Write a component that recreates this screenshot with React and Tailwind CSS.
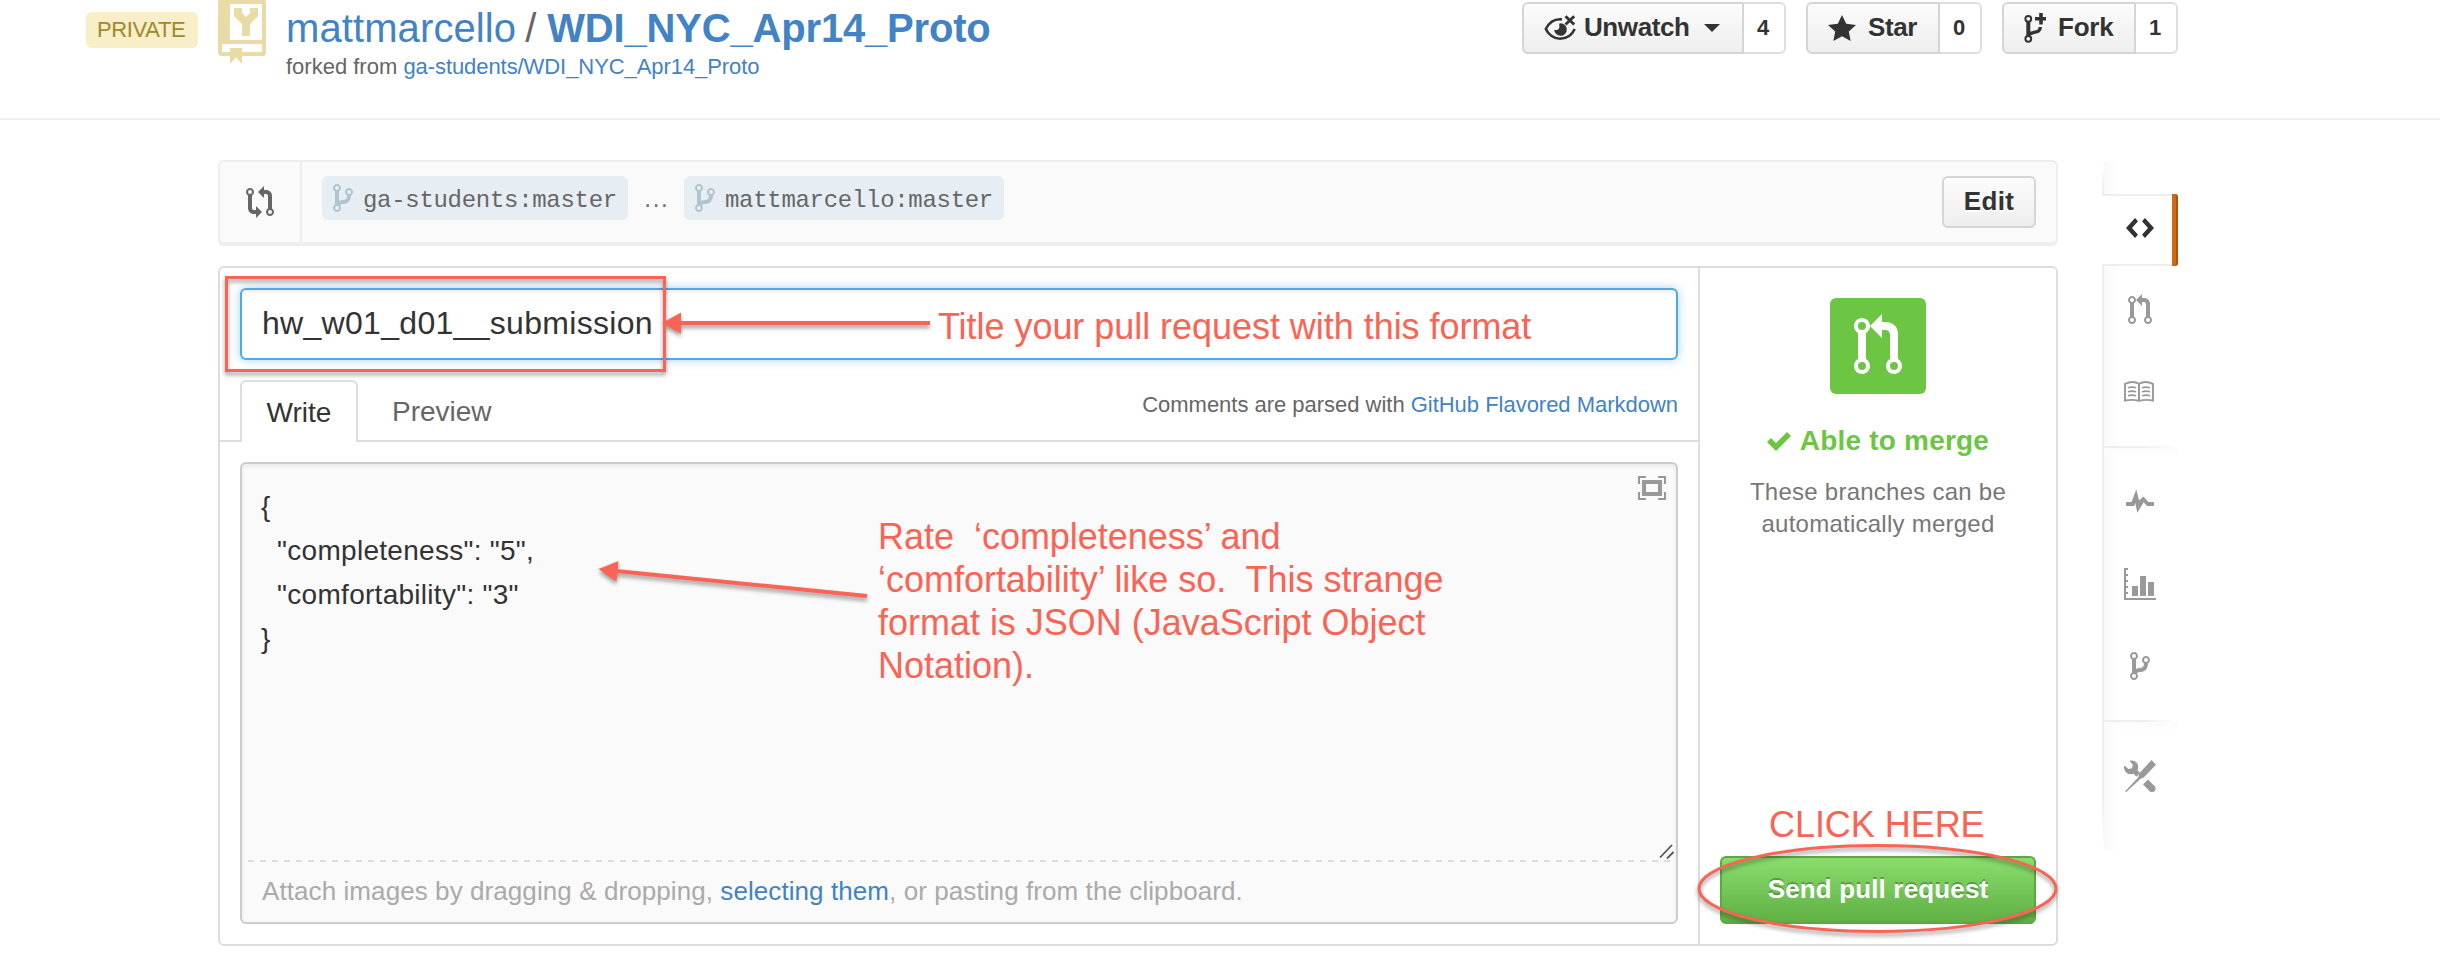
import React from "react";

const FONT = "font-['Liberation_Sans',Arial,sans-serif]";

function BranchIcon({ className }) {
  return (
    <svg viewBox="0 0 640 896" className={className} fill="currentColor" fillRule="evenodd">
      <path d="M512 128c-70.6 0-128 57.3-128 128 0 47.2 25.9 88 64 110.300V384s0 128-128 128c-53 0-94.700 11.400-128 28.800V238.300c38.200-22.200 64-63 64-110.300C256 57.300 198.700 0 128 0S0 57.300 0 128c0 47.200 25.800 88 64 110.300v419.400C25.800 680 0 720.800 0 768c0 70.600 57.300 128 128 128s128-57.400 128-128c0-33.500-13.200-63.700-34.200-86.600C240.400 658.500 270.700 640 320 640c254 0 256-256 256-256v-17.700c38.100-22.200 64-63 64-110.300 0-70.700-57.400-128-128-128zM128 64a64 64 0 1 1 0 128 64 64 0 0 1 0-128zm0 768a64 64 0 1 1 0-128 64 64 0 0 1 0 128zm384-512a64 64 0 1 1 0-128 64 64 0 0 1 0 128z" />
    </svg>
  );
}

function PullRequestIcon({ className }) {
  return (
    <svg viewBox="0 0 768 960" className={className} fill="currentColor" fillRule="evenodd">
      <path d="M128 64C57.300 64 0 121.300 0 192c0 47.200 25.800 88 64 110.300v419.400C25.800 744 0 784.800 0 832c0 70.600 57.300 128 128 128s128-57.400 128-128c0-47.200-25.800-88-64-110.300V302.300c38.200-22.200 64-63 64-110.300 0-70.700-57.300-128-128-128zm0 832a64 64 0 1 1 0-128 64 64 0 0 1 0 128zm0-640a64 64 0 1 1 0-128 64 64 0 0 1 0 128z" />
      <path d="M704 721.700V320c0-192.500-192-192-192-192h-64V0L256 192l192 192V256h64c56.400 0 64 64 64 64v401.700c-38.100 22.200-64 63-64 110.300 0 70.600 57.400 128 128 128s128-57.400 128-128c0-47.200-25.900-88-64-110.300zM640 896a64 64 0 1 1 0-128 64 64 0 0 1 0 128z" />
    </svg>
  );
}

function CompareIcon({ className }) {
  return (
    <svg viewBox="0 0 896 1024" className={className} fill="currentColor" fillRule="evenodd">
      <path d="M320 768h-64s-64 0-64-64V302.300c38.200-22.200 64-63 64-110.300 0-70.700-57.300-128-128-128S0 121.300 0 192c0 47.200 25.800 88 64 110.300V704c0 192 192 192 192 192h64v128l192-192-192-192v128zM128 256a64 64 0 1 1 0-128 64 64 0 0 1 0 128z" />
      <path d="M832 721.700V320c0-192-192-192-192-192h-64V0L384 192l192 192V256h64s64 0 64 64v401.700c-38.100 22.200-64 63-64 110.300 0 70.600 57.400 128 128 128s128-57.400 128-128c0-47.200-25.900-88-64-110.300zM768 896a64 64 0 1 1 0-128 64 64 0 0 1 0 128z" />
    </svg>
  );
}

function RepoIcon() {
  return (
    <svg viewBox="0 0 48 64" className="ml-5 h-16 w-12 shrink-0">
      <rect x="0" y="-1" width="48" height="57" rx="3.500" fill="#e9dba5" />
      <path d="M12 4h32v36H12zM4 44h40v8H4z" fill="#fff" />
      <path d="M16 8h8v5l4 4 4-4V8h8v8l-8 8v12h-8V24l-8-8z" fill="#e9dba5" />
      <path d="M12 48h12v16l-6-6.500-6 6.500z" fill="#e9dba5" />
    </svg>
  );
}

function UnwatchIcon() {
  return (
    <svg viewBox="0 0 34 26" className="mr-[6px] h-[26px] w-[34px]" fill="none" stroke="#333">
      <path d="M18 4.400C10 3.600 4.600 8.500 1.800 14 4 19 9.500 23.700 16 23.700c7 0 12.400-4.300 14.700-9.700" strokeWidth="2.600" />
      <path d="M16.500 8.200a6.300 6.300 0 1 1-6.300 6.500c2 .8 4.400 0 5-1.800.6-1.700-.4-2.900.2-4.400z" fill="#333" stroke="none" />
      <path d="M21.500 1.200l8.700 8.400M30.200 1.200l-8.700 8.400" strokeWidth="2.800" />
    </svg>
  );
}

function StarIcon() {
  return (
    <svg viewBox="0 64 896 832" className="mr-3 h-[26px] w-7" fill="#333">
      <path d="M896 384l-313.500-40.800L448 64 313.500 343.200 0 384l230.500 208.900L171 895.900l277-148.800 277 148.800-59.500-303z" />
    </svg>
  );
}

function ForkIcon() {
  return (
    <svg viewBox="0 0 22 30" className="mr-3 h-[30px] w-[22px]" fill="none" stroke="#333">
      <circle cx="4.300" cy="5.800" r="2.900" strokeWidth="2" />
      <circle cx="4.300" cy="25.800" r="2.900" strokeWidth="2" />
      <path d="M4.300 8.500v14.500" strokeWidth="4" />
      <path d="M5 21.500c3-3.500 11.300-.5 11.300-7.500" strokeWidth="3.400" />
      <path d="M17 0v11.500M11 5.700h11" strokeWidth="3.600" />
    </svg>
  );
}

function SocialButton({ icon, label, count, className, labelClass, caret }) {
  return (
    <div className="flex h-[52px]">
      <div className={`flex items-center rounded-l-md border-2 border-[#d5d5d5] bg-linear-to-b from-[#fcfcfc] to-[#eeeeee] pl-5 ${className}`}>
        {icon}
        <span className={`pb-[2px] text-[26px] leading-[46px] font-bold text-[#333] [text-shadow:0_2px_0_rgba(255,255,255,0.9)] ${labelClass}`}>{label}</span>
        {caret && (
          <svg viewBox="0 0 16 8" className="ml-[15px] h-2 w-4" fill="#333"><path d="M0 0h16L8 8z" /></svg>
        )}
      </div>
      <div className="w-[42px] rounded-r-md border-2 border-l-0 border-[#ddd] bg-white pr-[2px] text-center text-[22px] leading-[48px] font-bold text-[#333]">{count}</div>
    </div>
  );
}

function Header() {
  return (
    <header className="flex h-[120px] items-start border-b-2 border-[#eee] pr-[262px] pl-[86px]">
      <span className="mt-3 h-9 w-28 rounded-md bg-[#f8eec7] pl-[11px] text-[22px] leading-9 tracking-[-0.37px] text-[#a1882b]">PRIVATE</span>
      <RepoIcon />
      <div className="ml-5 pt-1 whitespace-nowrap">
        <h1 className="text-[40px] leading-[48px] text-[#4183c4]">
          <span className="tracking-[0.1px]">mattmarcello</span>
          <span className="pr-[11px] pl-[9px] text-[#666]">/</span>
          <strong className="tracking-[-0.18px]">WDI_NYC_Apr14_Proto</strong>
        </h1>
        <p className="mt-px text-[22px] leading-7 text-[#666]">
          forked from <span className="tracking-[-0.07px] text-[#4183c4]">ga-students/WDI_NYC_Apr14_Proto</span>
        </p>
      </div>
      <div className="mt-[2px] ml-auto flex gap-5">
        <SocialButton icon={<UnwatchIcon />} label="Unwatch" count="4" className="w-[222px]" labelClass="tracking-[-0.41px]" caret />
        <SocialButton icon={<StarIcon />} label="Star" count="0" className="w-[134px]" labelClass="tracking-[-0.4px]" />
        <SocialButton icon={<ForkIcon />} label="Fork" count="1" className="w-[134px]" labelClass="tracking-[-0.2px]" />
      </div>
    </header>
  );
}

function Branch({ name, className }) {
  return (
    <span className={`flex h-11 items-center rounded-md bg-[#e6eef3] pl-[11px] ${className}`}>
      <BranchIcon className="h-7 w-5 text-[#b0c4ce]" />
      <span className="mt-[5px] ml-[10px] font-['Liberation_Mono',monospace] text-[24px] leading-7 tracking-[-0.3px] text-[#666]">{name}</span>
    </span>
  );
}

function CompareBar() {
  return (
    <div className="flex h-[86px] rounded-md border-2 border-b-4 border-[#eee] bg-[#fafafa]">
      <div className="flex w-[82px] items-center justify-center border-r-2 border-[#eee] pb-px">
        <CompareIcon className="h-8 w-7 text-[#666]" />
      </div>
      <div className="flex flex-1 items-start pt-[14px] pr-5 pl-5">
        <Branch name="ga-students:master" className="w-[306px]" />
        <span className="w-14 pl-4 text-[26px] leading-[44px] tracking-[1.2px] text-[#777]">...</span>
        <Branch name="mattmarcello:master" className="w-[320px]" />
        <button className="ml-auto h-[52px] w-[94px] rounded-md border-2 border-[#d5d5d5] bg-linear-to-b from-[#fcfcfc] to-[#eeeeee] pb-[2px] text-[26px] leading-[46px] font-bold tracking-[0.4px] text-[#333] [text-shadow:0_2px_0_rgba(255,255,255,0.9)]">Edit</button>
      </div>
    </div>
  );
}

function Editor() {
  return (
    <section className="flex w-[1478px] flex-col">
      <div className="mx-5 mt-5 h-[72px] rounded-md border-2 border-[#51a7e8] bg-white pl-[20px] text-[32px] leading-[66px] tracking-[0.3px] text-[#333] shadow-[inset_0_2px_4px_rgba(0,0,0,0.075),0_0_10px_rgba(81,167,232,0.5)]">hw_w01_d01__submission</div>
      <div className="flex h-[82px] items-end border-b-2 border-[#ddd] px-5">
        <div className="-mb-[2px] h-[62px] w-[118px] rounded-t-md border-2 border-b-0 border-[#ddd] bg-white pt-px text-center text-[28px] leading-[60px] text-[#333]">Write</div>
        <div className="h-[60px] pt-[2px] pl-[34px] text-[28px] leading-[60px] text-[#666]">Preview</div>
        <p className="mt-[31px] ml-auto self-start text-[22px] leading-7 tracking-[-0.02px] text-[#666]">
          Comments are parsed with <span className="text-[#4183c4]">GitHub Flavored Markdown</span>
        </p>
      </div>
      <div className="relative mx-5 mt-5 flex h-[462px] flex-col rounded-md border-2 border-[#ccc] bg-[#fafafa] shadow-[inset_0_2px_4px_rgba(0,0,0,0.075)]">
        <pre className="flex-1 pt-[21px] pl-[19px] font-['Liberation_Sans',Arial,sans-serif] text-[28px] leading-[44px] tracking-[0.28px] text-[#333]">{'{\n  "completeness": "5",\n  "comfortability": "3"\n}'}</pre>
        <svg viewBox="0 0 28 24" className="absolute top-3 right-[10px] h-6 w-7" fill="none" stroke="#999">
          <path d="M1 8V1h7M20 1h7v7M27 16v7h-7M8 23H1v-7" strokeWidth="2" />
          <rect x="6" y="6" width="16" height="12" strokeWidth="4" />
        </svg>
        <svg viewBox="0 0 16 16" className="absolute right-px bottom-[63px] h-4 w-4" stroke="#555" strokeWidth="1.800">
          <path d="M1 14.500L13 2M8 15.500L14.500 9" />
        </svg>
        <div className="h-[2px] bg-[repeating-linear-gradient(90deg,transparent_0_6px,#ddd_6px_12px)]" />
        <p className="h-[60px] pl-5 text-[26px] leading-[59px] tracking-[0.08px] text-[#aaa]">
          Attach images by dragging &amp; dropping, <span className="text-[#4183c4]">selecting them</span>, or pasting from the clipboard.
        </p>
      </div>
    </section>
  );
}

function MergePanel() {
  return (
    <aside className="flex flex-1 flex-col items-center border-l-2 border-[#ddd] px-5 pb-5">
      <div className="mt-[30px] flex h-24 w-24 items-center justify-center rounded-md bg-[#6cc644] pb-1">
        <PullRequestIcon className="h-[60px] w-12 text-white" />
      </div>
      <h2 className="mt-[30px] flex items-center gap-[9px] text-[28px] leading-[34px] font-bold tracking-[0.2px] text-[#6cc644]">
        <svg viewBox="0 256 768 608" className="h-[19px] w-6" fill="currentColor"><path d="M640 256L288 608 128 448 0 576l288 288 480-480z" /></svg>
        Able to merge
      </h2>
      <p className="mt-[18px] text-center text-[24px] leading-8 tracking-[0.25px] text-[#777]">
        These branches can be<br />automatically merged
      </p>
      <button className="mt-auto h-[68px] w-full rounded-md border-2 border-[#5ca941] bg-linear-to-b from-[#8add6d] to-[#60b044] pb-[2px] text-[26px] font-bold tracking-[0.15px] text-white [text-shadow:0_-2px_0_rgba(0,0,0,0.25)]">Send pull request</button>
    </aside>
  );
}

function NavItem({ children }) {
  return <div className="flex h-[82px] w-[72px] items-center justify-center text-[#999]">{children}</div>;
}

function NavDivider() {
  return (
    <div className="-ml-[2px] h-3 border-l-2 border-[#eee]">
      <div className="h-[2px] w-[74px] bg-linear-to-r from-[#eee] from-50% to-transparent" />
      <div className="h-[10px] w-[74px] bg-linear-to-b from-[#fbfbfb] to-transparent" />
    </div>
  );
}

function SideNav() {
  return (
    <nav className="mt-[2px] ml-11 flex w-[76px] flex-col">
      <div className="flex h-[34px] border-b-2 border-[#eee]">
        <div className="w-[2px] bg-linear-to-b from-transparent to-[#eee]" />
        <div className="w-[14px] bg-linear-to-r from-[#f8f8f8] to-transparent" />
      </div>
      <div className="flex h-[68px] items-center justify-end">
        <svg viewBox="0 256 896 576" preserveAspectRatio="none" className="mr-[18px] mb-1 h-5 w-7" fill="#333">
          <path d="M288 256L0 544l288 288 96-96-192-192 192-192zM608 256l-96 96 192 192-192 192 96 96 288-288z" />
        </svg>
        <div className="z-10 -my-[2px] h-[72px] w-[6px] rounded-r-[3px] border-r-2 border-[#b4500f] bg-[#d26911]" />
      </div>
      <div className="h-[2px] bg-[#eee]" />
      <div className="flex">
        <div className="h-[584px] w-[2px] bg-linear-to-b from-[#eee] from-90% to-transparent" />
        <div className="-mr-[14px] h-[584px] w-[14px] bg-linear-to-r from-[#f9f9f9] to-transparent" />
        <div className="flex w-[74px] flex-col pt-[2px]">
          <NavItem><PullRequestIcon className="h-[30px] w-6" /></NavItem>
          <NavItem>
            <svg viewBox="0 0 30 21" className="mr-[2px] h-[21px] w-[30px]" fill="none" stroke="currentColor" strokeWidth="1.900">
              <path d="M1 2.800C6 .6 11 .4 15 2.800c4-2.400 9-2.200 14 0v16.700c-5-1-9-1-14 .3-5-1.300-9-1.300-14-.3z" />
              <path d="M15 2.500v17" strokeWidth="2" />
              <path d="M4 6.800q4-1.400 8 0M4 10.800q4-1.400 8 0M4 14.800q4-1.400 8 0M18 6.800q4-1.400 8 0M18 10.800q4-1.400 8 0M18 14.800q4-1.400 8 0" strokeWidth="1.600" />
            </svg>
          </NavItem>
          <div className="pt-[14px] pb-[2px]"><NavDivider /></div>
          <NavItem>
            <svg viewBox="0 0 28 24" className="h-6 w-7" fill="currentColor">
              <path d="M0 13h5.500L10.300.3l2.700 11.200L17.500 7.500l5 5.500H28v4h-7l-3.300-3.700L11.300 23.700 9.300 14 8.300 17H0z" />
            </svg>
          </NavItem>
          <div className="pt-px">
            <NavItem>
              <svg viewBox="0 0 32 32" className="h-8 w-8" fill="currentColor">
                <path d="M0 0h4v2H2v4h2v2H2v4h2v2H2v4h2v2H2v4h2v2H2v4h30v2H0zM8 18h6v10H8zM16 8h6v20h-6zM24 14h6v14h-6z" />
              </svg>
            </NavItem>
          </div>
          <NavItem><BranchIcon className="h-7 w-5" /></NavItem>
          <div className="pt-[13px] pb-[3px]"><NavDivider /></div>
          <NavItem>
            <svg viewBox="0 0 32 32" className="h-8 w-8" fill="currentColor">
              <path d="M5.500 1C9.500-.6 14.200 2.200 14.200 7c0 1.400-.3 2.300-.7 3.200l2.500 2.600-3.500 4-3-3C4.500 15.500 0 12 0 7.500c0-.7.200-1.500.4-2L4.500 9 8 8.200l.8-3.400z" />
              <path d="M21.500 22l6 6" stroke="currentColor" strokeWidth="7" />
              <circle cx="28" cy="28.500" r="3.500" />
              <path d="M27.500 0L32 4.700 20.500 17.500l-2.800 2.300L2.500 32 1 31.500 14.500 17l.3-3z" fill="#fff" />
              <path d="M27.500 0L32 4.700 19.500 17.800l-2.700.7L2.300 32 1 31.500 14.500 17l.2-3z" />
            </svg>
          </NavItem>
        </div>
      </div>
    </nav>
  );
}

function Annotations() {
  return (
    <div className="pointer-events-none absolute inset-0 text-[36px] leading-[43px] whitespace-pre text-[#fb6354]">
      <svg viewBox="0 0 2440 968" className="absolute inset-0 h-[968px] w-[2440px] [filter:drop-shadow(0_3px_2px_rgba(0,0,0,0.4))]" fill="none" stroke="#fb6354">
        <rect x="226.500" y="277.500" width="438" height="93" strokeWidth="3" />
        <path d="M930 323H678" strokeWidth="4" />
        <path d="M662 323l19-10.500v21z" fill="#fb6354" stroke="none" />
        <path d="M867 596L616 571" strokeWidth="4" />
        <path d="M598.500 569l20-8-2 20.500z" fill="#fb6354" stroke="none" />
        <ellipse cx="1877.500" cy="888.500" rx="178.500" ry="43" strokeWidth="3" />
      </svg>
      <p className="absolute top-[305px] left-[938px] tracking-[-0.04px]">Title your pull request with this format</p>
      <p className="absolute top-[515px] left-[878px] tracking-[-0.02px]">{"Rate  ‘completeness’ and\n‘comfortability’ like so.  This strange\nformat is JSON (JavaScript Object\nNotation)."}</p>
      <p className="absolute top-[803px] left-[1769px] tracking-[-0.05px]">CLICK HERE</p>
    </div>
  );
}

export default function App() {
  return (
    <div className={`relative h-[968px] w-[2440px] overflow-hidden bg-white ${FONT}`}>
      <Header />
      <main className="flex pt-10 pl-[218px]">
        <div className="w-[1840px]">
          <CompareBar />
          <div className="mt-5 flex h-[680px] rounded-md border-2 border-[#ddd]">
            <Editor />
            <MergePanel />
          </div>
        </div>
        <SideNav />
      </main>
      <Annotations />
    </div>
  );
}
